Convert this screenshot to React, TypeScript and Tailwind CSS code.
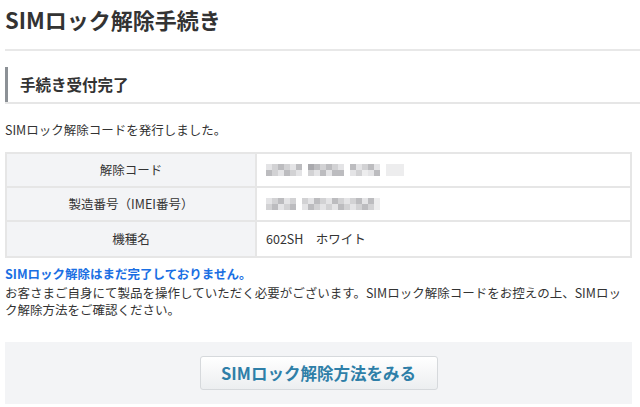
import React from "react";

const FONT = '"Noto Sans CJK JP", "Noto Sans", sans-serif';

// pixel mosaic standing in for the blurred values
function Mosaic({ rows }: { rows: string[][] }) {
  return (
    <div className="flex flex-col">
      {rows.map((r, i) => (
        <div key={i} className="flex">
          {r.map((c, j) => (
            <div key={j} className="h-[6px] w-[6px]" style={{ backgroundColor: c }} />
          ))}
        </div>
      ))}
    </div>
  );
}

const a = "#d2d2d4";
const b = "#bcbcbf";
const c = "#e4e4e6";
const d = "#a9a9ad";
const e = "#ededee";
const w = "transparent";

const code1 = [
  [c, a, b, a, c, b, w, d, b, a, b, a, c, w, b, c, a, b, c, w, e, e, e],
  [b, a, c, b, a, c, w, a, c, b, c, b, b, w, c, a, e, c, b, w, e, e, e],
];
const code2 = [
  [c, a, b, c, a, w, a, c, b, a, c, b, a, c, a, b, c, b, e],
  [a, b, c, a, b, w, c, b, a, c, a, c, b, a, c, a, b, a, e],
];

function Row({ label, children, last }: { label: string; children: React.ReactNode; last?: boolean }) {
  return (
    <div className={`flex h-[34px] ${last ? "" : "border-b-2 border-[#e6e6e6]"}`}>
      <div className="flex w-[250px] items-center justify-center border-r-2 border-[#e6e6e6] bg-[#f3f4f6] text-[12.5px] text-[#333]">
        {label}
      </div>
      <div className="flex flex-1 items-center pl-[9px] text-[12.5px] text-[#333]">{children}</div>
    </div>
  );
}

export default function App() {
  return (
    <div className="h-[407px] w-[640px] overflow-hidden bg-white pl-[5px] pr-[8px]" style={{ fontFamily: FONT }}>
      <h1 className="pt-[3px] text-[22px] font-bold leading-[32px] text-[#333]">SIMロック解除手続き</h1>
      <div className="mt-[14px] -mr-[8px] border-t-2 border-[#e8e8e8]" />

      <div className="mt-[16px] -mr-[8px] border-b-2 border-[#e6e6e6]">
        <div className="flex h-[35px] items-center border-l-[3px] border-[#8c9196] pl-[12px] text-[15.5px] font-bold text-[#333]">
          手続き受付完了
        </div>
      </div>

      <p className="mt-[17px] text-[12.5px] leading-[18px] text-[#333]">SIMロック解除コードを発行しました。</p>

      <div className="mt-[13px] border-2 border-[#e6e6e6]">
        <Row label="解除コード">
          <Mosaic rows={code1} />
        </Row>
        <Row label="製造番号（IMEI番号）">
          <Mosaic rows={code2} />
        </Row>
        <Row label="機種名" last>
          602SH　ホワイト
        </Row>
      </div>

      <p className="mt-[7px] text-[12.5px] font-bold leading-[17px] text-[#1a6fe3]">SIMロック解除はまだ完了しておりません。</p>
      <p className="mt-[2px] text-[12.5px] leading-[17px] text-[#333]">
        お客さまご自身にて製品を操作していただく必要がございます。SIMロック解除コードをお控えの上、SIMロック解除方法をご確認ください。
      </p>

      <div className="mt-[24px] flex h-[62px] items-center justify-center bg-[#f3f4f6]">
        <button className="h-[34px] w-[238px] rounded-[3px] border border-[#d6d9dc] bg-gradient-to-b from-white to-[#eceef0] text-[16.5px] font-bold text-[#2e7fa8]">
          SIMロック解除方法をみる
        </button>
      </div>
    </div>
  );
}
